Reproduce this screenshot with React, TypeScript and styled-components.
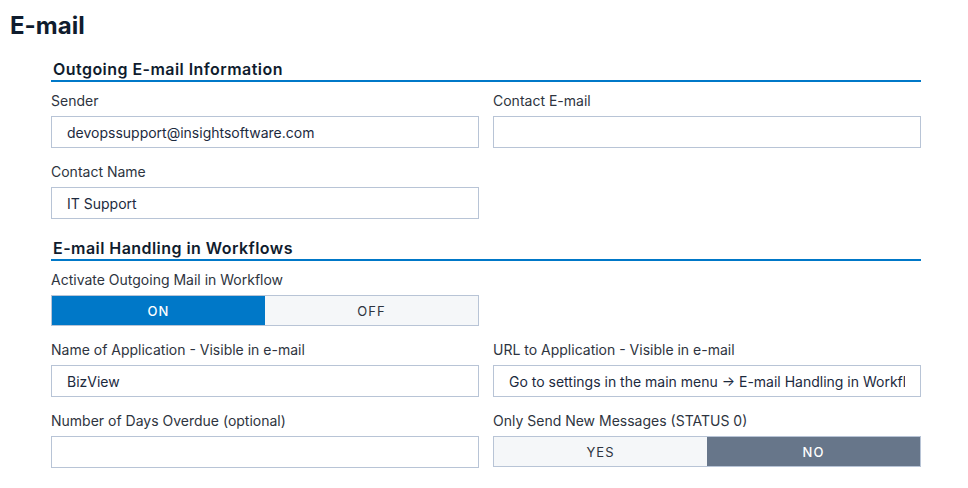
import React from 'react'
import styled, { createGlobalStyle } from 'styled-components'

const GlobalStyle = createGlobalStyle`
  body {
    margin: 0;
    background: #fff;
    font-family: Inter, "Noto Sans", sans-serif;
    color: #1c2a3e;
  }
`

const Page = styled.div`
  padding: 10px 0 0 10px;
`

const Title = styled.h1`
  margin: 0;
  font-size: 24px;
  font-weight: 700;
  line-height: 32px;
  color: #0f1c2e;
`

const Content = styled.div`
  width: 870px;
  margin: 17px 0 0 41px;
`

const SectionTitle = styled.h2<{ $first?: boolean }>`
  margin: ${({ $first }) => ($first ? '0' : '19px')} 0 0;
  padding: 0 2px;
  font-size: 16px;
  font-weight: 600;
  letter-spacing: 0.45px;
  line-height: 21px;
  color: #0f1c2e;
  border-bottom: 2px solid #0078c8;
`

const Grid = styled.div`
  display: grid;
  grid-template-columns: 428px 428px;
  column-gap: 14px;
  row-gap: 14px;
  margin-top: 9px;
`

const Field = styled.div`
  display: flex;
  flex-direction: column;
  gap: 5px;
`

const Label = styled.label`
  font-size: 14px;
  line-height: 20px;
  color: #2e3440;
`

const Input = styled.input`
  box-sizing: border-box;
  height: 32px;
  width: 100%;
  padding: 0 15px;
  border: 1px solid #b8c4d6;
  border-radius: 0;
  font-family: Inter, "Noto Sans", sans-serif;
  font-size: 14px;
  color: #1c2a3e;
  background: #fff;
  outline: none;
`

const Toggle = styled.div`
  box-sizing: border-box;
  display: grid;
  grid-template-columns: 1fr 1fr;
  height: 31px;
  border: 1px solid #b8c4d6;
`

const ToggleOption = styled.button<{ $active: boolean; $tone: 'blue' | 'slate' }>`
  border: none;
  margin: 0;
  padding: 0;
  font-family: Inter, "Noto Sans", sans-serif;
  font-size: 13px;
  letter-spacing: 1px;
  font-weight: ${({ $active }) => ($active ? 500 : 400)};
  color: ${({ $active }) => ($active ? '#fff' : '#2e3440')};
  background: ${({ $active, $tone }) =>
    !$active ? '#f5f7f9' : $tone === 'blue' ? '#0078c8' : '#67768a'};
  cursor: pointer;
`

type SwitchProps = {
  left: string
  right: string
  value: 'left' | 'right'
  tone: 'blue' | 'slate'
}

const Switch: React.FC<SwitchProps> = ({ left, right, value, tone }) => (
  <Toggle>
    <ToggleOption $active={value === 'left'} $tone={tone}>
      {left}
    </ToggleOption>
    <ToggleOption $active={value === 'right'} $tone={tone}>
      {right}
    </ToggleOption>
  </Toggle>
)

export default function App() {
  return (
    <Page>
      <GlobalStyle />
      <Title>E-mail</Title>
      <Content>
        <SectionTitle $first>Outgoing E-mail Information</SectionTitle>
        <Grid>
          <Field>
            <Label>Sender</Label>
            <Input readOnly defaultValue="devopssupport@insightsoftware.com" />
          </Field>
          <Field>
            <Label>Contact E-mail</Label>
            <Input readOnly defaultValue="" />
          </Field>
          <Field>
            <Label>Contact Name</Label>
            <Input readOnly defaultValue="IT Support" />
          </Field>
        </Grid>

        <SectionTitle>E-mail Handling in Workflows</SectionTitle>
        <Grid>
          <Field>
            <Label>Activate Outgoing Mail in Workflow</Label>
            <Switch left="ON" right="OFF" value="left" tone="blue" />
          </Field>
          <div />
          <Field>
            <Label>Name of Application - Visible in e-mail</Label>
            <Input readOnly defaultValue="BizView" />
          </Field>
          <Field>
            <Label>URL to Application - Visible in e-mail</Label>
            <Input
              readOnly
              defaultValue="Go to settings in the main menu → E-mail Handling in Workflows"
            />
          </Field>
          <Field>
            <Label>Number of Days Overdue (optional)</Label>
            <Input readOnly defaultValue="" />
          </Field>
          <Field>
            <Label>Only Send New Messages (STATUS 0)</Label>
            <Switch left="YES" right="NO" value="right" tone="slate" />
          </Field>
        </Grid>
      </Content>
    </Page>
  )
}
